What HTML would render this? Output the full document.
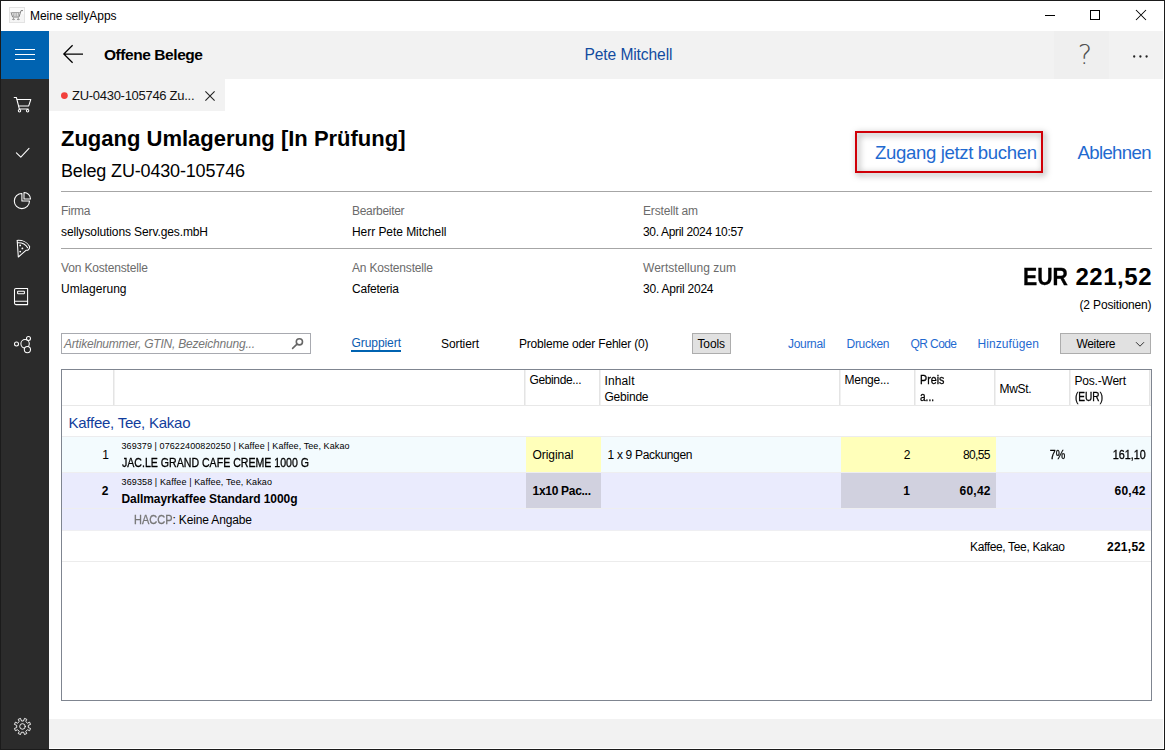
<!DOCTYPE html>
<html lang="de">
<head>
<meta charset="utf-8">
<title>Meine sellyApps</title>
<style>
html,body{margin:0;padding:0;}
body{width:1165px;height:750px;overflow:hidden;background:#fff;font-family:"Liberation Sans",sans-serif;position:relative;}
.abs,.t,svg.i{position:absolute;}
.t{white-space:pre;line-height:1;}
#frame{left:0;top:0;width:1163px;height:748px;border:1px solid #1b1b1b;z-index:50;pointer-events:none;}
#titlebar{left:1px;top:1px;width:1163px;height:30px;background:#fff;}
#header{left:49px;top:31px;width:1114px;height:48px;background:#f2f2f2;}
#helpbtn{left:1054px;top:31px;width:55px;height:48px;background:#efefef;}
#burger{left:1px;top:31px;width:48px;height:48px;background:#0063b1;}
#sidebar{left:1px;top:79px;width:48px;height:670px;background:#2b2b2b;}
#tab{left:49px;top:79px;width:176px;height:32px;background:#f2f2f2;}
#footer{left:49px;top:719px;width:1114px;height:29px;background:#f2f2f2;}
.hr{left:61px;width:1091px;height:1px;background:#a6a6a6;}
#redbox{left:855px;top:131px;width:184px;height:38px;border:2px solid #d00008;filter:drop-shadow(2px 2.5px 3px rgba(0,0,0,.5));}
#search{left:61px;top:333px;width:248px;height:19px;border:1px solid #a8aab0;background:#fff;}
.btn{background:#e1e1e1;border:1px solid #adadad;}
#grid{left:61px;top:369px;width:1089px;height:330px;border:1px solid #7f8590;background:#fff;}
.vs{top:370px;width:2px;height:35px;background:linear-gradient(to right,#e4e4e4 50%,#f1f1f1 50%);}
.hl{left:62px;width:1089px;height:1px;}
.row{left:62px;width:1089px;}
</style>
</head>
<body>
<div class="abs" id="titlebar"></div>
<div class="abs" id="header"></div>
<div class="abs" id="helpbtn"></div>
<div class="abs" id="burger"></div>
<div class="abs" id="sidebar"></div>
<div class="abs" id="tab"></div>
<div class="abs" id="footer"></div>

<!-- separators -->
<div class="abs hr" style="top:191px"></div>
<div class="abs hr" style="top:248px"></div>

<!-- action box -->
<div class="abs" id="redbox"></div>

<!-- toolbar -->
<div class="abs" id="search"></div>
<div class="abs" style="left:351px;top:350px;width:50px;height:2px;background:#0063b1"></div>
<div class="abs btn" style="left:692px;top:333px;width:37px;height:19px"></div>
<div class="abs btn" style="left:1060px;top:333px;width:89px;height:19px"></div>

<!-- grid -->
<div class="abs" id="grid"></div>
<div class="abs hl" style="top:405px;background:#e8e8e8"></div>
<div class="abs vs" style="left:113px"></div>
<div class="abs vs" style="left:524px"></div>
<div class="abs vs" style="left:599px"></div>
<div class="abs vs" style="left:839px"></div>
<div class="abs vs" style="left:914px"></div>
<div class="abs vs" style="left:994px"></div>
<div class="abs vs" style="left:1069px"></div>
<div class="abs vs" style="left:1149px"></div>
<div class="abs row" style="top:437px;height:35px;background:#f3fbfe"></div>
<div class="abs row" style="top:473px;height:57px;background:#eaebfd"></div>
<div class="abs hl" style="top:436px;background:#ececee"></div>
<div class="abs hl" style="top:472px;background:#eeeef0"></div>
<div class="abs hl" style="top:508px;background:#eeeef0"></div>
<div class="abs hl" style="top:530px;background:#efeff2"></div>
<div class="abs" style="left:526px;top:437px;width:75px;height:35px;background:#ffffba"></div>
<div class="abs" style="left:841px;top:437px;width:155px;height:35px;background:#ffffba"></div>
<div class="abs" style="left:526px;top:473px;width:75px;height:35px;background:#d1d1df"></div>
<div class="abs" style="left:841px;top:473px;width:155px;height:35px;background:#d1d1df"></div>
<div class="abs hl" style="top:561px;background:#ececec"></div>

<svg class="i" style="left:0;top:0" width="1165" height="750" viewBox="0 0 1165 750">
<!-- app icon -->
<rect x="9.5" y="7.5" width="15" height="15" fill="#f5f5f5" stroke="#e3e3e3"/><rect x="10" y="8" width="14" height="6" fill="#fbfbfb"/>
<g fill="none" stroke="#8a8a8a" stroke-width="1">
<path d="M11 12.4 L12.6 17 H19 L21 10.6 H23" stroke="#808080"/>
<path d="M11.4 12.6 H19.8" stroke="#9c9c9c"/>
<path d="M13 12.6 L13.6 16.6 M14.9 12.6 L15.1 16.6 M16.8 12.6 L16.7 16.6 M18.6 12.6 L18.2 16.6" stroke="#a8a8a8"/>
<path d="M12.2 19.4 H14.8 M17 19.4 H19.6" stroke="#8f8f8f"/><path d="M13.5 17.4 V20.2 M18.3 17.4 V20.2" stroke="#a0a0a0"/>
</g>
<!-- window controls -->
<rect x="1045" y="15" width="10" height="1" fill="#000"/>
<rect x="1090.5" y="10.5" width="9" height="9" fill="none" stroke="#000" stroke-width="1"/>
<path d="M1136 10 L1146 20 M1146 10 L1136 20" stroke="#000" stroke-width="1.05" fill="none"/>
<!-- hamburger -->
<rect x="15" y="49" width="20" height="1" fill="#fff"/>
<rect x="15" y="54" width="20" height="1" fill="#fff"/>
<rect x="15" y="59" width="20" height="1" fill="#fff"/>
<!-- back arrow -->
<path d="M83 54 H64 M72.6 45.2 L63.8 54 L72.6 62.8" fill="none" stroke="#000" stroke-width="1.25"/>
<!-- more dots -->
<circle cx="1134.2" cy="56.5" r="1.15" fill="#222"/><circle cx="1140.4" cy="56.5" r="1.15" fill="#222"/><circle cx="1146.6" cy="56.5" r="1.15" fill="#222"/>
<!-- tab dot + close -->
<circle cx="64.4" cy="95.6" r="3.4" fill="#f2403c"/>
<path d="M205.4 91.4 L214.6 100.6 M214.6 91.4 L205.4 100.6" stroke="#222" stroke-width="1.1" fill="none"/>
<!-- sidebar: cart -->
<g fill="none" stroke="#fff" stroke-width="1.05" stroke-linecap="round" stroke-linejoin="round">
<path d="M14.2 97.5 H16.4 L19.3 108.9 H28.2"/>
<path d="M17.1 99.5 H30.8 L28.7 105.9 H18.7"/>
<circle cx="19.5" cy="110.7" r="1.2"/><circle cx="27.6" cy="110.7" r="1.2"/>
<!-- check -->
<path d="M16.4 152.8 L20.8 157.2 L29 148.4"/>
<!-- pie -->
<path d="M21.9 193.4 A7.6 7.6 0 1 0 29.5 201 H21.9 Z"/>
<path d="M24 192.4 A6.5 6.5 0 0 1 30.5 198.9 H24 Z"/>
<!-- pizza -->
<path d="M17 240.4 C22 240 27.4 242 29.6 246.6 C29.8 248.6 28.4 250.6 26 250.3 L18.3 257 L17.2 240.6"/>
<path d="M17.4 242.8 C21.6 242.6 25.6 244 27.6 247.8"/>
<!-- book -->
<path d="M27.6 288.5 H16 Q14.5 288.5 14.5 290 V303.1 Q14.5 304.6 16 304.6 H27.6 Z"/>
<rect x="17.6" y="291.2" width="6.8" height="2.6" rx="0.5"/>
<path d="M14.5 301.3 H27.6"/>
<!-- share -->
<circle cx="16.5" cy="343.9" r="2"/>
<circle cx="25.1" cy="343.8" r="4.2"/>
<circle cx="28.5" cy="338.5" r="2" fill="#2b2b2b"/>
<circle cx="27.4" cy="349.6" r="3.1" fill="#2b2b2b"/>
<!-- gear -->
<path d="M23.65 720.66 L24.50 718.39 L26.78 719.34 L25.78 721.54 L27.41 723.17 L29.61 722.17 L30.56 724.45 L28.29 725.30 L28.29 727.60 L30.56 728.45 L29.61 730.73 L27.41 729.73 L25.78 731.36 L26.78 733.56 L24.50 734.51 L23.65 732.24 L21.35 732.24 L20.50 734.51 L18.22 733.56 L19.22 731.36 L17.59 729.73 L15.39 730.73 L14.44 728.45 L16.71 727.60 L16.71 725.30 L14.44 724.45 L15.39 722.17 L17.59 723.17 L19.22 721.54 L18.22 719.34 L20.50 718.39 L21.35 720.66 Z" stroke-width="0.9"/>
<circle cx="22.5" cy="726.45" r="2.8" stroke-width="0.9"/>
</g>
<g fill="#fff"><circle cx="20.2" cy="245.4" r="0.9"/><circle cx="22.4" cy="248.4" r="0.9"/><circle cx="20.2" cy="251.6" r="0.9"/></g>
<!-- search icon -->
<g fill="none" stroke="#666" stroke-width="1.6" stroke-linecap="round"><circle cx="299.4" cy="341.8" r="3.1"/><path d="M297 344.2 L292.6 348.4"/></g>
<!-- chevron -->
<path d="M1136 342.2 L1140 346.2 L1144 342.2" fill="none" stroke="#333" stroke-width="1"/>
</svg>
<span class="t" style="left:1077px;top:41px;width:16px;text-align:center;font-family:'DejaVu Sans Light','DejaVu Sans',sans-serif;font-weight:200;font-size:27px;color:#505050;">?</span>


<span class="t" style="font-size:12px;color:#000;letter-spacing:-0.062px;left:30.00px;top:10.00px;">Meine sellyApps</span>
<span class="t" style="font-size:15.5px;color:#000;font-weight:bold;letter-spacing:-0.436px;left:104.00px;top:47.00px;">Offene Belege</span>
<span class="t" style="font-size:15.6px;color:#124ba0;letter-spacing:-0.107px;left:584.50px;top:47.00px;">Pete Mitchell</span>
<span class="t" style="font-size:13px;color:#111;letter-spacing:-0.285px;left:72.00px;top:89.00px;">ZU-0430-105746 Zu...</span>
<span class="t" style="font-size:22px;color:#000;font-weight:bold;letter-spacing:-0.005px;left:61.00px;top:128.00px;">Zugang Umlagerung [In Prüfung]</span>
<span class="t" style="font-size:18px;color:#000;letter-spacing:-0.165px;left:61.00px;top:162.00px;">Beleg ZU-0430-105746</span>
<span class="t" style="font-size:18.6px;color:#1f6ad0;letter-spacing:-0.361px;left:875.00px;top:144.00px;">Zugang jetzt buchen</span>
<span class="t" style="font-size:18.6px;color:#1f6ad0;letter-spacing:-0.656px;left:1077.50px;top:144.00px;">Ablehnen</span>
<span class="t" style="font-size:12px;color:#6b6b6b;letter-spacing:-0.293px;left:61.00px;top:205.00px;">Firma</span>
<span class="t" style="font-size:12px;color:#000;letter-spacing:-0.109px;left:61.00px;top:226.00px;">sellysolutions Serv.ges.mbH</span>
<span class="t" style="font-size:12px;color:#6b6b6b;letter-spacing:-0.319px;left:352.00px;top:205.00px;">Bearbeiter</span>
<span class="t" style="font-size:12px;color:#000;letter-spacing:-0.051px;left:352.00px;top:226.00px;">Herr Pete Mitchell</span>
<span class="t" style="font-size:12px;color:#6b6b6b;letter-spacing:-0.169px;left:643.00px;top:205.00px;">Erstellt am</span>
<span class="t" style="font-size:12px;color:#000;letter-spacing:-0.330px;left:643.00px;top:226.00px;">30. April 2024 10:57</span>
<span class="t" style="font-size:12px;color:#6b6b6b;letter-spacing:-0.160px;left:61.00px;top:262.00px;">Von Kostenstelle</span>
<span class="t" style="font-size:12px;color:#000;letter-spacing:0.014px;left:61.00px;top:283.00px;">Umlagerung</span>
<span class="t" style="font-size:12px;color:#6b6b6b;letter-spacing:-0.171px;left:352.00px;top:262.00px;">An Kostenstelle</span>
<span class="t" style="font-size:12px;color:#000;letter-spacing:-0.213px;left:352.00px;top:283.00px;">Cafeteria</span>
<span class="t" style="font-size:12px;color:#6b6b6b;letter-spacing:0.034px;left:643.00px;top:262.00px;">Wertstellung zum</span>
<span class="t" style="font-size:12px;color:#000;letter-spacing:-0.222px;left:643.00px;top:283.00px;">30. April 2024</span>
<span class="t" style="font-size:24px;color:#000;font-weight:bold;left:1023.00px;top:265.00px;transform:scaleX(0.8881);transform-origin:left center;-webkit-text-stroke:0.3px #000;">EUR</span>
<span class="t" style="font-size:24px;color:#000;font-weight:bold;letter-spacing:0.519px;left:1075.50px;top:265.00px;">221,52</span>
<span class="t" style="font-size:12px;color:#000;letter-spacing:-0.157px;left:1079.50px;top:299.00px;">(2 Positionen)</span>
<span class="t" style="font-size:12px;color:#767676;font-style:italic;letter-spacing:-0.208px;left:64.00px;top:338.00px;">Artikelnummer, GTIN, Bezeichnung...</span>
<span class="t" style="font-size:12px;color:#0a5cb0;letter-spacing:-0.066px;left:351.50px;top:337.00px;">Gruppiert</span>
<span class="t" style="font-size:12px;color:#000;letter-spacing:-0.098px;left:441.00px;top:338.00px;">Sortiert</span>
<span class="t" style="font-size:12px;color:#000;letter-spacing:-0.198px;left:519.00px;top:338.00px;">Probleme oder Fehler (0)</span>
<span class="t" style="font-size:12px;color:#000;letter-spacing:-0.129px;left:697.50px;top:338.00px;">Tools</span>
<span class="t" style="font-size:12px;color:#1f6ad0;letter-spacing:-0.310px;left:788.00px;top:338.00px;">Journal</span>
<span class="t" style="font-size:12px;color:#1f6ad0;letter-spacing:-0.281px;left:846.50px;top:338.00px;">Drucken</span>
<span class="t" style="font-size:12px;color:#1f6ad0;letter-spacing:-0.589px;left:910.50px;top:338.00px;">QR Code</span>
<span class="t" style="font-size:12px;color:#1f6ad0;letter-spacing:0.087px;left:977.50px;top:338.00px;">Hinzufügen</span>
<span class="t" style="font-size:12px;color:#000;letter-spacing:-0.357px;left:1076.50px;top:338.00px;">Weitere</span>
<span class="t" style="font-size:12px;color:#000;letter-spacing:-0.375px;left:529.50px;top:374.00px;">Gebinde...</span>
<span class="t" style="font-size:12px;color:#000;letter-spacing:0.128px;left:604.50px;top:375.00px;">Inhalt</span>
<span class="t" style="font-size:12px;color:#000;letter-spacing:-0.229px;left:604.50px;top:391.00px;">Gebinde</span>
<span class="t" style="font-size:12px;color:#000;letter-spacing:-0.243px;left:844.50px;top:374.00px;">Menge...</span>
<span class="t" style="font-size:12px;color:#000;left:919.50px;top:374.00px;transform:scaleX(0.8960);transform-origin:left center;-webkit-text-stroke:0.3px #000;">Preis</span>
<span class="t" style="font-size:12px;color:#000;left:919.50px;top:391.00px;transform:scaleX(0.8390);transform-origin:left center;-webkit-text-stroke:0.3px #000;">a...</span>
<span class="t" style="font-size:12px;color:#000;letter-spacing:-0.336px;left:999.50px;top:383.00px;">MwSt.</span>
<span class="t" style="font-size:12px;color:#000;letter-spacing:-0.203px;left:1074.50px;top:375.00px;">Pos.-Wert</span>
<span class="t" style="font-size:12px;color:#000;left:1074.50px;top:391.00px;transform:scaleX(0.8401);transform-origin:left center;-webkit-text-stroke:0.3px #000;">(EUR)</span>
<span class="t" style="font-size:15px;color:#113d9c;letter-spacing:-0.248px;left:68.50px;top:415.00px;">Kaffee, Tee, Kakao</span>
<span class="t" style="font-size:12px;color:#000;left:102.31px;top:449.00px;">1</span>
<span class="t" style="font-size:9px;color:#000;letter-spacing:0.082px;left:121.50px;top:442.00px;">369379 | 07622400820250 | Kaffee | Kaffee, Tee, Kakao</span>
<span class="t" style="font-size:12px;color:#000;left:121.50px;top:457.00px;transform:scaleX(0.8818);transform-origin:left center;-webkit-text-stroke:0.3px #000;">JAC.LE GRAND CAFE CREME 1000 G</span>
<span class="t" style="font-size:12px;color:#000;letter-spacing:-0.051px;left:532.50px;top:449.00px;">Original</span>
<span class="t" style="font-size:12px;color:#000;letter-spacing:-0.315px;left:607.50px;top:449.00px;">1 x 9 Packungen</span>
<span class="t" style="font-size:12px;color:#000;left:903.81px;top:449.00px;">2</span>
<span class="t" style="font-size:12px;color:#000;letter-spacing:-0.633px;left:963.00px;top:449.00px;">80,55</span>
<span class="t" style="font-size:12px;color:#000;left:1048.16px;top:449.00px;transform:scaleX(0.8937);transform-origin:right center;-webkit-text-stroke:0.3px #000;">7%</span>
<span class="t" style="font-size:12px;color:#000;left:1108.80px;top:449.00px;transform:scaleX(0.8991);transform-origin:right center;-webkit-text-stroke:0.3px #000;">161,10</span>
<span class="t" style="font-size:12px;color:#000;font-weight:bold;left:101.81px;top:485.00px;">2</span>
<span class="t" style="font-size:9px;color:#000;letter-spacing:0.120px;left:121.50px;top:478.00px;">369358 | Kaffee | Kaffee, Tee, Kakao</span>
<span class="t" style="font-size:12px;color:#000;font-weight:bold;letter-spacing:-0.075px;left:121.50px;top:493.00px;">Dallmayrkaffee Standard 1000g</span>
<span class="t" style="font-size:12px;color:#000;font-weight:bold;letter-spacing:-0.289px;left:532.50px;top:485.00px;">1x10 Pac...</span>
<span class="t" style="font-size:12px;color:#000;font-weight:bold;left:903.31px;top:485.00px;">1</span>
<span class="t" style="font-size:12px;color:#000;font-weight:bold;letter-spacing:0.242px;left:959.50px;top:485.00px;">60,42</span>
<span class="t" style="font-size:12px;color:#000;font-weight:bold;letter-spacing:0.242px;left:1114.50px;top:485.00px;">60,42</span>
<span class="t" style="font-size:12px;color:#777;left:133.50px;top:514.00px;transform:scaleX(0.9163);transform-origin:left center;-webkit-text-stroke:0.3px #777;">HACCP</span>
<span class="t" style="font-size:12px;color:#000;letter-spacing:-0.147px;left:172.50px;top:514.00px;">: Keine Angabe</span>
<span class="t" style="font-size:12px;color:#000;letter-spacing:-0.351px;left:970.00px;top:541.00px;">Kaffee, Tee, Kakao</span>
<span class="t" style="font-size:12px;color:#000;font-weight:bold;letter-spacing:0.259px;left:1107.00px;top:541.00px;">221,52</span>

<div class="abs" id="frame"></div>
</body>
</html>
